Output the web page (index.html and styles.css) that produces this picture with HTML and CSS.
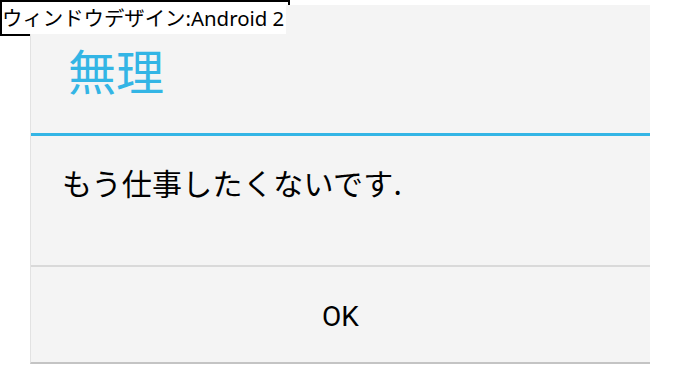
FILE: index.html
```html
<!DOCTYPE html>
<html lang="ja">
<head>
<meta charset="utf-8">
<title>ウィンドウデザイン:Android 2</title>
<link rel="stylesheet" href="styles.css">
</head>
<body>
<div class="stage">
  <div class="label-frame"></div>
  <div class="label-text">ウィンドウデザイン:Android 2</div>
  <div class="dialog">
    <div class="dialog-title">無理</div>
    <div class="dialog-body">もう仕事したくないです.</div>
    <div class="dialog-buttons"><span class="btn">OK</span></div>
  </div>
</div>
</body>
</html>
```
FILE: styles.css
```css
html, body {
  margin: 0;
  padding: 0;
  background: #ffffff;
}
body {
  font-family: "Noto Sans CJK JP", "Noto Sans", sans-serif;
  color: #000;
}
.stage {
  position: relative;
  width: 680px;
  height: 368px;
  overflow: hidden;
}
.label-frame {
  position: absolute;
  left: 0;
  top: 0;
  width: 286px;
  height: 32px;
  border: 2px solid #000;
  z-index: 0;
}
.label-text {
  position: absolute;
  left: 2px;
  top: 2px;
  height: 32px;
  width: 284px;
  background: #fff;
  font-family: "Noto Sans", "Noto Sans CJK JP", sans-serif;
  font-size: 20.4px;
  line-height: 32px;
  white-space: nowrap;
  z-index: 2;
}
.dialog {
  position: relative;
  z-index: 1;
  margin: 5px 0 0 30px;
  width: 619px;
  background: #f4f4f4;
  border-left: 1px solid #e2e2e2;
  border-bottom: 2px solid #c4c4c4;
  display: flex;
  flex-direction: column;
}
.dialog-title {
  box-sizing: border-box;
  height: 131px;
  padding-left: 37px;
  display: flex;
  align-items: center;
  font-size: 48px;
  color: #33b5e5;
  border-bottom: 3px solid #33b5e5;
}
.dialog-body {
  box-sizing: border-box;
  height: 131px;
  padding: 26px 0 0 31px;
  font-size: 30px;
  line-height: 40px;
  letter-spacing: 0.3px;
  color: #000;
  border-bottom: 2px solid #d9d9d9;
}
.dialog-buttons {
  height: 95px;
  display: flex;
  align-items: center;
  justify-content: center;
}
.btn {
  font-family: Roboto, "Noto Sans", sans-serif;
  font-size: 28px;
  color: #000;
  padding-top: 4px;
}
```
